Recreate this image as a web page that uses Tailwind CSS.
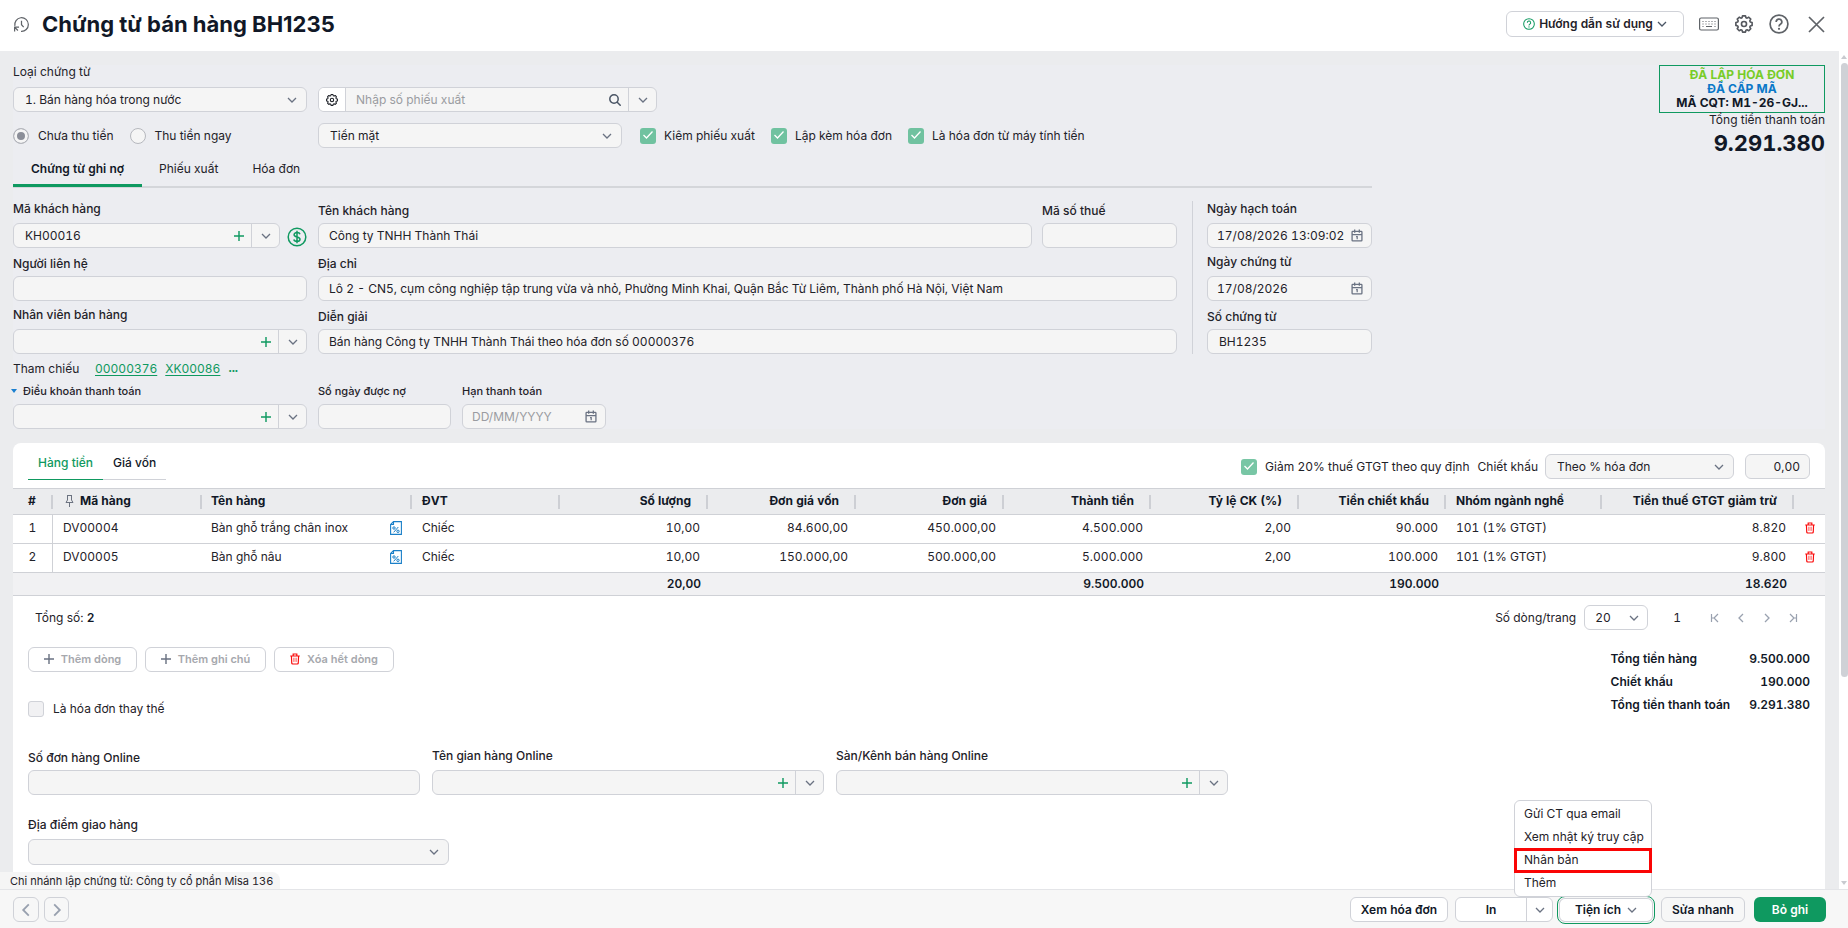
<!DOCTYPE html>
<html lang="vi">
<head>
    <meta charset="UTF-8">
    <meta name="viewport" content="width=device-width, initial-scale=1.0">
    <title>Chứng từ bán hàng BH1235</title>
    <script src="https://cdn.jsdelivr.net/npm/@tailwindcss/browser@4"></script>
</head>
<body class="flex flex-col h-screen overflow-hidden bg-white font-[Inter,sans-serif] tabular-nums text-[12px] leading-4 text-[#1f2229]">

    <!-- Icon sprite -->
    <svg class="hidden" aria-hidden="true">
        <symbol id="chevron" viewBox="0 0 10 10"><path d="M1 3l4 4 4-4" fill="none" stroke="currentColor" stroke-width="1.3"/></symbol>
        <symbol id="plus" viewBox="0 0 12 12"><path d="M6 0v12M0 6h12" fill="none" stroke="currentColor" stroke-width="1.7"/></symbol>
        <symbol id="gear" viewBox="0 0 20 20">
            <path d="M8.3 1.5h3.4l.6 2.2 1.3.5 2-1.1 2.3 2.3-1.1 2 .5 1.3 2.2.6v3.4l-2.2.6-.5 1.3 1.1 2-2.3 2.3-2-1.1-1.3.5-.6 2.2H8.3l-.6-2.2-1.3-.5-2 1.1-2.3-2.3 1.1-2-.5-1.3L.5 12.7V9.3l2.2-.6.5-1.3-1.1-2 2.3-2.3 2 1.1 1.3-.5z" transform="translate(.5 -.5) scale(.95)" fill="none" stroke="currentColor" stroke-width="1.9" stroke-linejoin="round"/>
            <circle cx="10" cy="10" r="2.8" fill="none" stroke="currentColor" stroke-width="1.8"/>
        </symbol>
        <symbol id="help" viewBox="0 0 20 20">
            <circle cx="10" cy="10" r="8.9" fill="none" stroke="currentColor" stroke-width="1.7"/>
            <path d="M7.2 8a2.8 2.8 0 1 1 4.2 2.3c-1 .6-1.4 1-1.4 2.1" fill="none" stroke="currentColor" stroke-width="1.7"/>
            <circle cx="10" cy="14.8" r="1.1" fill="currentColor"/>
        </symbol>
        <symbol id="calendar" viewBox="0 0 12 14">
            <path d="M1.5 2.5h9a.8.8 0 0 1 .8.8v8.700a.8.8 0 0 1-.8.8h-9a.8.8 0 0 1-.8-.8V3.300a.8.8 0 0 1 .8-.8zM.7 6h10.600M3.500.5v3.500M8.500.5v3.500" fill="none" stroke="currentColor" stroke-width="1.4"/>
            <path d="M5 8.300h1.200v2.700" fill="none" stroke="currentColor" stroke-width="1.3"/>
        </symbol>
        <symbol id="trash" viewBox="0 0 12 14">
            <path d="M.3 3.400h11.400M3.800 3V1h4.400v2M1.700 3.500l.4 8.500q.1 1 1 1h5.800q.9 0 1-1l.4-8.500" fill="none" stroke="currentColor" stroke-width="1.4"/>
            <path d="M4.700 5.500v5M7.300 5.500v5" fill="none" stroke="currentColor" stroke-width=".9"/>
        </symbol>
        <symbol id="tax" viewBox="0 0 12 14">
            <path d="M3.500.6h7.900v12.800H.6V3.500zM3.500.6v2.900H.6" fill="none" stroke="currentColor" stroke-width="1.1"/>
            <circle cx="4" cy="7" r="1.2" fill="none" stroke="currentColor"/>
            <circle cx="8" cy="10.3" r="1.2" fill="none" stroke="currentColor"/>
            <path d="M8.300 6l-4.600 5.300" stroke="currentColor"/>
        </symbol>
    </svg>

    <!-- Header -->
    <header class="flex items-center h-[51px] shrink-0 pl-[13px] pr-[23px] pb-[3px]">
        <svg class="size-[17px] text-[#5f6368]" viewBox="0 0 18 18" fill="none" stroke="currentColor" stroke-width="1.3">
            <path d="M8.500 16.200A7.200 7.200 0 1 0 2 10.500M1.700 16.500v-4.700h4.700M1.900 12l3.300 3.300"/>
            <path d="M9 5v4.300l2.300 2.400"/>
        </svg>
        <h1 class="ml-3 text-[22px] leading-7 font-bold normal-nums text-[#111827]">Chứng từ bán hàng BH1235</h1>
        <button class="flex items-center justify-center gap-1 ml-auto w-[178px] h-[26px] border border-[#d0d2d8] rounded-md font-semibold">
            <svg class="size-3 text-[#0f9960]"><use href="#help"/></svg>
            Hướng dẫn sử dụng
            <svg class="size-[10px] text-gray-600"><use href="#chevron"/></svg>
        </button>
        <button class="ml-[15px] text-[#5f6368]" aria-label="Phím tắt">
            <svg class="w-5 h-[14px]" viewBox="0 0 20 14" fill="none" stroke="currentColor">
                <rect x=".6" y="1" width="18.800" height="12" rx="1.500" stroke-width="1.2"/>
                <path d="M3.500 4.500h13M3.500 7h13" stroke-width="1" stroke-dasharray="1 2"/>
                <path d="M3.500 9.500h1M7 9.500h6M15.500 9.500h1"/>
            </svg>
        </button>
        <button class="ml-4 text-[#55585e]" aria-label="Thiết lập"><svg class="size-[18px]"><use href="#gear"/></svg></button>
        <button class="ml-4 text-[#5f6368]" aria-label="Trợ giúp"><svg class="size-5"><use href="#help"/></svg></button>
        <button class="ml-[19px] text-[#5f6368]" aria-label="Đóng">
            <svg class="size-[17px]" viewBox="0 0 17 17"><path d="M1 1l15 15M16 1L1 16" stroke="currentColor" stroke-width="1.7"/></svg>
        </button>
    </header>

    <div class="relative flex flex-1 min-h-0">
        <main class="flex-1 min-w-0 overflow-hidden bg-[#ebecee] pt-[14px] pl-[13px] pr-[14px]">
            <div class="flex justify-between bg-[#ecedf1]">
                <div class="flex-1 max-w-[1359px]">
                    <label for="docType" class="block leading-[14px]">Loại chứng từ</label>
                    <div class="flex mt-2 gap-[11px]">
                        <div class="relative w-[294px]">
                            <select id="docType" class="appearance-none w-full h-[25px] pl-[11px] pr-7 border border-[#d0d2d8] rounded-md bg-[#f5f5f5]">
                                <option>1. Bán hàng hóa trong nước</option>
                            </select>
                            <svg class="absolute right-[10px] top-2 size-[10px] text-gray-500 pointer-events-none"><use href="#chevron"/></svg>
                        </div>
                        <div class="flex w-[339px] h-[25px] border border-[#d0d2d8] rounded-md bg-[#f5f5f5] overflow-hidden">
                            <button class="flex items-center justify-center w-[27px] bg-white border-r border-[#d0d2d8]" aria-label="Tùy chọn"><svg class="size-3"><use href="#gear"/></svg></button>
                            <input type="text" aria-label="Số phiếu xuất" placeholder="Nhập số phiếu xuất" class="flex-1 min-w-0 px-[10px] placeholder:text-[#9a9ca1]">
                            <button class="px-[7px] text-gray-600" aria-label="Tìm">
                                <svg class="size-3" viewBox="0 0 12 12" fill="none" stroke="currentColor" stroke-width="1.5"><circle cx="5" cy="5" r="4.2"/><path d="M8 8l3.700 3.700"/></svg>
                            </button>
                            <button class="flex items-center justify-center w-7 border-l border-[#d0d2d8] text-gray-500" aria-label="Mở danh sách"><svg class="size-[10px]"><use href="#chevron"/></svg></button>
                        </div>
                    </div>

                    <div class="flex items-center mt-[11px] h-[25px] leading-[14px]">
                        <div class="flex items-center w-[305px]">
                            <input type="radio" name="pay" id="unpaid" checked class="appearance-none size-4 border border-[#b6b8be] rounded-full bg-[#f5f5f5] checked:bg-[#8b8e98] checked:shadow-[inset_0_0_0_3px_#f5f5f5]">
                            <label for="unpaid" class="ml-[9px]">Chưa thu tiền</label>
                            <input type="radio" name="pay" id="paid" class="appearance-none ml-4 size-4 border border-[#b6b8be] rounded-full bg-[#f5f5f5]">
                            <label for="paid" class="ml-[9px]">Thu tiền ngay</label>
                        </div>
                        <div class="relative w-[304px]">
                            <select aria-label="Phương thức thanh toán" class="appearance-none w-full h-[25px] px-[11px] border border-[#d0d2d8] rounded-md bg-[#f5f5f5]">
                                <option>Tiền mặt</option>
                            </select>
                            <svg class="absolute right-[10px] top-2 size-[10px] text-gray-500 pointer-events-none"><use href="#chevron"/></svg>
                        </div>
                        <div class="flex items-center gap-4 ml-[18px]">
                            <label class="flex items-center gap-2">
                                <span class="relative size-4">
                                    <input type="checkbox" checked class="block appearance-none size-4 rounded-[3px] bg-[#70c2a0]">
                                    <svg class="absolute left-[3px] top-[2px] size-[10px] text-white" viewBox="0 0 10 10"><path d="M.5 5l3 3 6-6.500" fill="none" stroke="currentColor" stroke-width="1.3"/></svg>
                                </span>
                                Kiêm phiếu xuất
                            </label>
                            <label class="flex items-center gap-2">
                                <span class="relative size-4">
                                    <input type="checkbox" checked class="block appearance-none size-4 rounded-[3px] bg-[#70c2a0]">
                                    <svg class="absolute left-[3px] top-[2px] size-[10px] text-white" viewBox="0 0 10 10"><path d="M.5 5l3 3 6-6.500" fill="none" stroke="currentColor" stroke-width="1.3"/></svg>
                                </span>
                                Lập kèm hóa đơn
                            </label>
                            <label class="flex items-center gap-2">
                                <span class="relative size-4">
                                    <input type="checkbox" checked class="block appearance-none size-4 rounded-[3px] bg-[#70c2a0]">
                                    <svg class="absolute left-[3px] top-[2px] size-[10px] text-white" viewBox="0 0 10 10"><path d="M.5 5l3 3 6-6.500" fill="none" stroke="currentColor" stroke-width="1.3"/></svg>
                                </span>
                                Là hóa đơn từ máy tính tiền
                            </label>
                        </div>
                    </div>

                    <nav class="flex h-10 border-b-2 border-[#d4d6da]">
                        <button class="h-[39px] px-[18px] pt-[6px] border-b-3 border-[#0f9960] font-semibold text-[#111827]">Chứng từ ghi nợ</button>
                        <button class="h-9 px-[17px] pt-[6px]">Phiếu xuất</button>
                        <button class="h-9 px-[17px] pt-[6px]">Hóa đơn</button>
                    </nav>

                    <div class="flex mt-[13px]">
                        <!-- Customer codes -->
                        <div class="flex flex-col gap-[6px] w-[294px] mr-[11px]">
                            <div class="flex items-end gap-[7px]">
                                <div class="flex flex-col gap-1.5 flex-1">
                                    <label for="customerCode" class="font-medium">Mã khách hàng</label>
                                    <div class="flex h-[25px] border border-[#d0d2d8] rounded-md bg-[#f5f5f5]">
                                        <input id="customerCode" type="text" value="KH00016" class="flex-1 min-w-0 pl-[11px]">
                                        <button class="px-[7px] text-[#0f9960]" aria-label="Thêm"><svg class="size-[10px]"><use href="#plus"/></svg></button>
                                        <button class="flex items-center justify-center w-7 border-l border-[#d0d2d8] text-gray-500" aria-label="Mở danh sách"><svg class="size-[10px]"><use href="#chevron"/></svg></button>
                                    </div>
                                </div>
                                <button class="pb-px text-[#0f9960]" aria-label="Công nợ">
                                    <svg class="size-5" viewBox="0 0 20 20" fill="none" stroke="currentColor" stroke-width="1.5">
                                        <circle cx="10" cy="10" r="8.8"/>
                                        <path d="M13 7.300c-.3-1.200-1.500-1.700-3-1.700s-2.900.6-2.900 2.100c0 3 5.900 1.400 5.900 4.500 0 1.500-1.400 2.200-3 2.200s-2.900-.6-3.200-1.900M10 3.800v12.400"/>
                                    </svg>
                                </button>
                            </div>
                            <div class="flex flex-col gap-1 pt-[2px]">
                                <label for="contact" class="font-medium">Người liên hệ</label>
                                <input id="contact" type="text" class="h-[25px] px-3 border border-[#d0d2d8] rounded-md bg-[#f5f5f5]">
                            </div>
                            <div class="flex flex-col gap-1.5">
                                <label for="seller" class="font-medium">Nhân viên bán hàng</label>
                                <div class="flex h-[25px] border border-[#d0d2d8] rounded-md bg-[#f5f5f5]">
                                    <input id="seller" type="text" class="flex-1 min-w-0 pl-3">
                                    <button class="px-[7px] text-[#0f9960]" aria-label="Thêm"><svg class="size-[10px]"><use href="#plus"/></svg></button>
                                    <button class="flex items-center justify-center w-7 border-l border-[#d0d2d8] text-gray-500" aria-label="Mở danh sách"><svg class="size-[10px]"><use href="#chevron"/></svg></button>
                                </div>
                            </div>
                        </div>
                        <!-- Customer details -->
                        <div class="flex flex-col gap-2 flex-1 min-w-0 pt-[2px]">
                            <div class="flex gap-[10px]">
                                <div class="flex flex-col gap-1 flex-1">
                                    <label for="customerName" class="font-medium">Tên khách hàng</label>
                                    <input id="customerName" type="text" value="Công ty TNHH Thành Thái" class="h-[25px] px-[10px] border border-[#d0d2d8] rounded-md bg-[#f5f5f5]">
                                </div>
                                <div class="flex flex-col gap-1 w-[135px]">
                                    <label for="taxCode" class="font-medium">Mã số thuế</label>
                                    <input id="taxCode" type="text" class="h-[25px] px-[10px] border border-[#d0d2d8] rounded-md bg-[#f5f5f5]">
                                </div>
                            </div>
                            <div class="flex flex-col gap-1">
                                <label for="address" class="font-medium">Địa chỉ</label>
                                <input id="address" type="text" value="Lô 2 - CN5, cụm công nghiệp tập trung vừa và nhỏ, Phường Minh Khai, Quận Bắc Từ Liêm, Thành phố Hà Nội, Việt Nam" class="h-[25px] px-[10px] border border-[#d0d2d8] rounded-md bg-[#f5f5f5]">
                            </div>
                            <div class="flex flex-col gap-1">
                                <label for="note" class="font-medium">Diễn giải</label>
                                <input id="note" type="text" value="Bán hàng Công ty TNHH Thành Thái theo hóa đơn số 00000376" class="h-[25px] px-[10px] border border-[#d0d2d8] rounded-md bg-[#f5f5f5]">
                            </div>
                        </div>
                        <!-- Dates -->
                        <div class="flex flex-col gap-[6px] ml-[15px] pl-[14px] border-l border-[#d0d2d8]">
                            <div class="flex flex-col gap-1.5">
                                <label for="postDate" class="font-medium">Ngày hạch toán</label>
                                <div class="flex items-center w-[165px] h-[25px] pr-2 border border-[#d0d2d8] rounded-md bg-[#f5f5f5]">
                                    <input id="postDate" type="text" value="17/08/2026 13:09:02" class="flex-1 min-w-0 pl-[9px]">
                                    <svg class="w-3 h-[13px] text-gray-500"><use href="#calendar"/></svg>
                                </div>
                            </div>
                            <div class="flex flex-col gap-1.5">
                                <label for="docDate" class="font-medium">Ngày chứng từ</label>
                                <div class="flex items-center w-[165px] h-[25px] pr-2 border border-[#d0d2d8] rounded-md bg-[#f5f5f5]">
                                    <input id="docDate" type="text" value="17/08/2026" class="flex-1 min-w-0 pl-[9px]">
                                    <svg class="w-3 h-[13px] text-gray-500"><use href="#calendar"/></svg>
                                </div>
                            </div>
                            <div class="flex flex-col gap-1 pt-[2px]">
                                <label for="docNo" class="font-medium">Số chứng từ</label>
                                <input id="docNo" type="text" value="BH1235" class="w-[165px] h-[25px] px-[11px] border border-[#d0d2d8] rounded-md bg-[#f5f5f5]">
                            </div>
                        </div>
                    </div>

                    <div class="flex mt-[7px] text-[#0f9960]">
                        <span class="w-[82px] text-[#1f2229]">Tham chiếu</span>
                        <a href="#" class="underline underline-offset-2">00000376</a>
                        <a href="#" class="ml-2 underline underline-offset-2">XK00086</a>
                        <a href="#" class="ml-2 font-bold leading-[14px]">...</a>
                    </div>

                    <div class="flex mt-[6px] text-[11px] font-medium">
                        <div class="flex flex-col gap-[5px] w-[294px] mr-[11px]">
                            <label for="terms" class="flex items-center gap-[6px] -ml-[2px]">
                                <svg class="w-[6px] h-1 text-[#1a7fd0]" viewBox="0 0 6 4"><path d="M0 0h6L3 4z" fill="currentColor"/></svg>
                                Điều khoản thanh toán
                            </label>
                            <div class="flex h-[25px] border border-[#d0d2d8] rounded-md bg-[#f5f5f5]">
                                <input id="terms" type="text" class="flex-1 min-w-0 pl-3">
                                <button class="px-[7px] text-[#0f9960]" aria-label="Thêm"><svg class="size-[10px]"><use href="#plus"/></svg></button>
                                <button class="flex items-center justify-center w-7 border-l border-[#d0d2d8] text-gray-500" aria-label="Mở danh sách"><svg class="size-[10px]"><use href="#chevron"/></svg></button>
                            </div>
                        </div>
                        <div class="flex flex-col gap-[5px] w-[133px] mr-[11px]">
                            <label for="dueDays">Số ngày được nợ</label>
                            <input id="dueDays" type="text" class="h-[25px] px-[10px] border border-[#d0d2d8] rounded-md bg-[#f5f5f5]">
                        </div>
                        <div class="flex flex-col gap-[5px] w-[144px]">
                            <label for="dueDate">Hạn thanh toán</label>
                            <div class="flex items-center h-[25px] pr-2 border border-[#d0d2d8] rounded-md bg-[#f5f5f5]">
                                <input id="dueDate" type="text" placeholder="DD/MM/YYYY" class="flex-1 min-w-0 pl-[9px] text-[12px] font-normal placeholder:text-[#9a9ca1]">
                                <svg class="w-3 h-[13px] text-gray-500"><use href="#calendar"/></svg>
                            </div>
                        </div>
                    </div>
                </div>

                <div class="flex flex-col items-end">
                    <div class="w-[166px] h-12 pt-[2px] border border-[#0f9960] text-center font-bold leading-[14px]">
                        <div class="text-[#78cc28]">ĐÃ LẬP HÓA ĐƠN</div>
                        <div class="text-[#0a78c8]">ĐÃ CẤP MÃ</div>
                        <div class="text-[#111827]">MÃ CQT: M1-26-GJ...</div>
                    </div>
                    <div class="leading-[14px]">Tổng tiền thanh toán</div>
                    <div class="mt-[2px] text-[22px] leading-7 font-bold text-[#111827]">9.291.380</div>
                </div>
            </div>

            <section class="h-full mt-[14px] bg-white rounded-t-lg">
                <div class="flex items-start justify-between h-[45px] pl-[15px] pr-[15px]">
                    <nav class="flex font-medium">
                        <button class="h-[37px] px-[10px] pt-1 border-b border-[#0f9960] text-[#0f9960]">Hàng tiền</button>
                        <button class="h-[37px] px-[10px] pt-1 border-b border-[#d0d2d8] text-[#111827]">Giá vốn</button>
                    </nav>
                    <div class="flex items-center pt-[11px]">
                        <label class="flex items-center gap-2">
                            <span class="relative size-4">
                                <input type="checkbox" checked class="block appearance-none size-4 rounded-[3px] bg-[#78c6a5]">
                                <svg class="absolute left-[3px] top-[2px] size-[10px] text-white" viewBox="0 0 10 10"><path d="M.5 5l3 3 6-6.500" fill="none" stroke="currentColor" stroke-width="1.3"/></svg>
                            </span>
                            Giảm 20% thuế GTGT theo quy định
                        </label>
                        <label for="discountType" class="ml-2">Chiết khấu</label>
                        <div class="relative ml-[7px] w-[189px]">
                            <select id="discountType" class="appearance-none w-full h-[25px] px-[11px] border border-[#d0d2d8] rounded-md bg-[#f5f5f5]">
                                <option>Theo % hóa đơn</option>
                            </select>
                            <svg class="absolute right-[10px] top-2 size-[10px] text-gray-500 pointer-events-none"><use href="#chevron"/></svg>
                        </div>
                        <input type="text" aria-label="Tỷ lệ chiết khấu" value="0,00" class="ml-[11px] w-[65px] h-[25px] px-[9px] border border-[#d0d2d8] rounded-md bg-[#f5f5f5] text-right">
                    </div>
                </div>

                <table class="w-full table-fixed border-separate border-spacing-0 leading-[14px] [&_td]:border-b [&_td]:border-[#cfd1d6] [&_th]:border-y [&_th]:border-[#cfd1d6] [&_td]:p-0 [&_th]:p-0">
                    <colgroup>
                        <col class="w-[40px]"><col class="w-[149px]"><col class="w-[210px]"><col class="w-[148px]"><col class="w-[148px]"><col class="w-[148px]"><col class="w-[148px]"><col class="w-[147px]"><col class="w-[148px]"><col class="w-[147px]"><col class="w-[156px]"><col class="w-[192px]"><col class="w-[31px]">
                    </colgroup>
                    <thead class="bg-[#ebecee] font-semibold text-[#111827]">
                        <tr class="h-[27px] [&_div]:h-[14px] [&_div]:leading-3 [&_div]:border-[#cdcfd4]">
                            <th><div class="border-r-2">#</div></th>
                            <th><div class="flex gap-[6px] pl-3 border-r-2">
                                <svg class="w-[9px] h-3" viewBox="0 0 9 12" fill="none" stroke="#6b7280"><path d="M2 .5h5M2.500.5v4.500L1 7.500h7L6.500 5V.5M4.500 7.500V12"/></svg>
                                Mã hàng
                            </div></th>
                            <th><div class="pl-[9px] text-left border-r-2">Tên hàng</div></th>
                            <th><div class="pl-[10px] text-left border-r-2">ĐVT</div></th>
                            <th><div class="pr-[15px] text-right border-r-2">Số lượng</div></th>
                            <th><div class="pr-[15px] text-right border-r-2">Đơn giá vốn</div></th>
                            <th><div class="pr-[15px] text-right border-r-2">Đơn giá</div></th>
                            <th><div class="pr-[15px] text-right border-r-2">Thành tiền</div></th>
                            <th><div class="pr-[15px] text-right border-r-2">Tỷ lệ CK (%)</div></th>
                            <th><div class="pr-[15px] text-right border-r-2">Tiền chiết khấu</div></th>
                            <th><div class="pl-[10px] text-left border-r-2">Nhóm ngành nghề</div></th>
                            <th><div class="pr-[15px] text-right border-r-2">Tiền thuế GTGT giảm trừ</div></th>
                            <th></th>
                        </tr>
                    </thead>
                    <tbody class="[&_tr]:h-[29px] [&_td]:pb-[2px] text-right">
                        <tr>
                            <td class="text-center border-r border-r-white">1</td>
                            <td><div class="pl-[10px] text-left">DV00004</div></td>
                            <td><div class="flex items-center justify-between pl-[9px] pr-[10px]">Bàn ghỗ trắng chân inox <svg class="w-3 h-[14px] text-[#1a7fc8]"><use href="#tax"/></svg></div></td>
                            <td><div class="pl-[10px] text-left">Chiếc</div></td>
                            <td><div class="pr-2">10,00</div></td>
                            <td><div class="pr-2">84.600,00</div></td>
                            <td><div class="pr-2">450.000,00</div></td>
                            <td><div class="pr-2">4.500.000</div></td>
                            <td><div class="pr-2">2,00</div></td>
                            <td><div class="pr-2">90.000</div></td>
                            <td><div class="pl-[10px] text-left">101 (1% GTGT)</div></td>
                            <td><div class="pr-2">8.820</div></td>
                            <td><button class="block mx-auto text-[#fa0a0a]" aria-label="Xóa dòng 1"><svg class="w-[10px] h-3"><use href="#trash"/></svg></button></td>
                        </tr>
                        <tr>
                            <td class="text-center border-r border-r-white">2</td>
                            <td><div class="pl-[10px] text-left">DV00005</div></td>
                            <td><div class="flex items-center justify-between pl-[9px] pr-[10px]">Bàn ghỗ nâu <svg class="w-3 h-[14px] text-[#1a7fc8]"><use href="#tax"/></svg></div></td>
                            <td><div class="pl-[10px] text-left">Chiếc</div></td>
                            <td><div class="pr-2">10,00</div></td>
                            <td><div class="pr-2">150.000,00</div></td>
                            <td><div class="pr-2">500.000,00</div></td>
                            <td><div class="pr-2">5.000.000</div></td>
                            <td><div class="pr-2">2,00</div></td>
                            <td><div class="pr-2">100.000</div></td>
                            <td><div class="pl-[10px] text-left">101 (1% GTGT)</div></td>
                            <td><div class="pr-2">9.800</div></td>
                            <td><button class="block mx-auto text-[#fa0a0a]" aria-label="Xóa dòng 2"><svg class="w-[10px] h-3"><use href="#trash"/></svg></button></td>
                        </tr>
                    </tbody>
                    <tfoot class="bg-[#f1f1f3] text-right font-semibold text-[#111827]">
                        <tr class="h-[23px]">
                            <td colspan="4"></td>
                            <td><div class="pr-[7px]">20,00</div></td>
                            <td colspan="2"></td>
                            <td><div class="pr-[7px]">9.500.000</div></td>
                            <td></td>
                            <td><div class="pr-[7px]">190.000</div></td>
                            <td></td>
                            <td><div class="pr-[7px]">18.620</div></td>
                            <td></td>
                        </tr>
                    </tfoot>
                </table>

                <div class="flex items-center mt-[9px] pl-[22px] pr-[27px] leading-[14px]">
                    <p>Tổng số: <b class="font-semibold text-[#111827]">2</b></p>
                    <label for="pageSize" class="ml-auto">Số dòng/trang</label>
                    <div class="relative ml-2 w-16">
                        <select id="pageSize" class="appearance-none w-full h-[25px] px-[10px] border border-[#d0d2d8] rounded-md bg-white">
                            <option>20</option>
                        </select>
                        <svg class="absolute right-[9px] top-2 size-[10px] text-gray-500 pointer-events-none"><use href="#chevron"/></svg>
                    </div>
                    <span class="ml-[25px] mr-[29px]">1</span>
                    <div class="flex items-center gap-4 text-gray-400">
                        <button aria-label="Trang đầu"><svg class="size-[10px]" viewBox="0 0 10 10"><path d="M1.500 1v8M8 1L4 5l4 4M1.500 5H4" fill="none" stroke="currentColor" stroke-width="1.2"/></svg></button>
                        <button aria-label="Trang trước"><svg class="size-[10px] rotate-90"><use href="#chevron"/></svg></button>
                        <button aria-label="Trang sau"><svg class="size-[10px] -rotate-90"><use href="#chevron"/></svg></button>
                        <button aria-label="Trang cuối"><svg class="size-[10px]" viewBox="0 0 10 10"><path d="M8.500 1v8M2 1l4 4-4 4M8.500 5H6" fill="none" stroke="currentColor" stroke-width="1.2"/></svg></button>
                    </div>
                </div>

                <div class="flex justify-between mt-[17px] pl-[15px] pr-[15px]">
                    <div>
                        <div class="flex gap-2 text-[11px] font-semibold text-[#a6a8ad] [&_button]:pb-[2px]">
                            <button class="flex items-center justify-center gap-[7px] w-[109px] h-[25px] border border-[#d0d2d8] rounded-md"><svg class="size-[10px] text-gray-500"><use href="#plus"/></svg>Thêm dòng</button>
                            <button class="flex items-center justify-center gap-[7px] w-[121px] h-[25px] border border-[#d0d2d8] rounded-md"><svg class="size-[10px] text-gray-500"><use href="#plus"/></svg>Thêm ghi chú</button>
                            <button class="flex items-center justify-center gap-[7px] w-[120px] h-[25px] border border-[#d0d2d8] rounded-md"><svg class="w-[10px] h-3 text-[#fa0a0a]"><use href="#trash"/></svg>Xóa hết dòng</button>
                        </div>
                        <label class="flex items-center gap-[9px] mt-[29px]">
                            <input type="checkbox" class="appearance-none size-4 border border-[#d0d2d8] rounded-[3px] bg-[#f1f1f3]">
                            Là hóa đơn thay thế
                        </label>
                    </div>
                    <dl class="grid grid-cols-[auto_auto] gap-x-[19px] h-[69px] leading-[23px] font-semibold text-[#111827] [&_dd]:text-right">
                        <dt>Tổng tiền hàng</dt><dd>9.500.000</dd>
                        <dt>Chiết khấu</dt><dd>190.000</dd>
                        <dt>Tổng tiền thanh toán</dt><dd>9.291.380</dd>
                    </dl>
                </div>

                <div class="grid grid-cols-3 gap-3 max-w-[1215px] mt-[31px] pl-[15px]">
                    <div class="flex flex-col gap-1 pt-[2px]">
                        <label for="onlineOrder" class="font-medium">Số đơn hàng Online</label>
                        <input id="onlineOrder" type="text" class="h-[25px] px-3 border border-[#d0d2d8] rounded-md bg-[#f5f5f5]">
                    </div>
                    <div class="flex flex-col gap-1.5">
                        <label for="onlineShop" class="font-medium">Tên gian hàng Online</label>
                        <div class="flex h-[25px] border border-[#d0d2d8] rounded-md bg-[#f5f5f5]">
                            <input id="onlineShop" type="text" class="flex-1 min-w-0 pl-3">
                            <button class="px-[7px] text-[#0f9960]" aria-label="Thêm"><svg class="size-[10px]"><use href="#plus"/></svg></button>
                            <button class="flex items-center justify-center w-7 border-l border-[#d0d2d8] text-gray-500" aria-label="Mở danh sách"><svg class="size-[10px]"><use href="#chevron"/></svg></button>
                        </div>
                    </div>
                    <div class="flex flex-col gap-1.5">
                        <label for="onlineChannel" class="font-medium">Sàn/Kênh bán hàng Online</label>
                        <div class="flex h-[25px] border border-[#d0d2d8] rounded-md bg-[#f5f5f5]">
                            <input id="onlineChannel" type="text" class="flex-1 min-w-0 pl-3">
                            <button class="px-[7px] text-[#0f9960]" aria-label="Thêm"><svg class="size-[10px]"><use href="#plus"/></svg></button>
                            <button class="flex items-center justify-center w-7 border-l border-[#d0d2d8] text-gray-500" aria-label="Mở danh sách"><svg class="size-[10px]"><use href="#chevron"/></svg></button>
                        </div>
                    </div>
                </div>

                <div class="flex flex-col gap-1.5 mt-[22px] pl-[15px]">
                    <label for="deliveryPlace" class="font-medium">Địa điểm giao hàng</label>
                    <div class="relative w-[421px]">
                        <select id="deliveryPlace" class="appearance-none w-full h-[26px] px-[11px] border border-[#d0d2d8] rounded-md bg-[#f5f5f5]"></select>
                        <svg class="absolute right-[10px] top-2 size-[10px] text-gray-500 pointer-events-none"><use href="#chevron"/></svg>
                    </div>
                </div>
            </section>
        </main>

        <!-- Scrollbar -->
        <div class="flex flex-col items-center w-[9px] pt-1 pb-1 bg-white text-[#c8cacf]">
            <svg class="w-[6px] h-1" viewBox="0 0 6 4"><path d="M3 0l3 4H0z" fill="currentColor"/></svg>
            <div class="w-[7px] h-[74%] mt-1 ml-[2px] rounded-full bg-[#cfd1d6]"></div>
            <svg class="w-[6px] h-1 mt-auto" viewBox="0 0 6 4"><path d="M0 0h6L3 4z" fill="currentColor"/></svg>
        </div>

        <p class="absolute left-0 bottom-0 h-[17px] pl-[10px] pr-[7px] rounded-tr-lg bg-[#f5f5f5] text-[11px] leading-[18px]">Chi nhánh lập chứng từ: Công ty cổ phần Misa 136</p>
    </div>

    <!-- Action bar -->
    <footer class="flex items-center shrink-0 h-[39px] pt-px pl-[13px] pr-[22px] border-t border-[#e4e5e8] bg-[#f7f7f7] font-semibold text-[#111827]">
        <button class="flex items-center justify-center w-[26px] h-[25px] border border-[#d0d2d8] rounded-md text-gray-400" aria-label="Chứng từ trước"><svg class="size-[14px] rotate-90"><use href="#chevron"/></svg></button>
        <button class="flex items-center justify-center w-[25px] h-[25px] ml-[5px] border border-[#d0d2d8] rounded-md text-gray-400" aria-label="Chứng từ sau"><svg class="size-[14px] -rotate-90"><use href="#chevron"/></svg></button>

        <button class="ml-auto w-[98px] h-[25px] border border-[#d0d2d8] rounded-md bg-white">Xem hóa đơn</button>
        <div class="flex ml-[7px] w-[98px] h-[25px] border border-[#d0d2d8] rounded-md bg-white">
            <button class="flex-1">In</button>
            <button class="flex items-center justify-center w-[26px] border-l border-[#d0d2d8] text-gray-500" aria-label="Tùy chọn in"><svg class="size-[10px]"><use href="#chevron"/></svg></button>
        </div>
        <div class="relative ml-1">
            <button class="flex items-center justify-center gap-[6px] w-[98px] h-[28px] border border-[#0f9960] rounded-lg bg-white shadow-[inset_0_0_0_1px_#f7f7f7,inset_0_0_0_2px_#d0d2d8]">
                Tiện ích <svg class="size-[10px] text-gray-500"><use href="#chevron"/></svg>
            </button>
            <div class="absolute right-[3px] bottom-[27px] flex flex-col w-[138px] pt-[2px] pb-px border border-[#d0d2d8] rounded-md bg-white font-normal text-[#1f2229] [&_button]:h-[23px] [&_button]:px-[9px] [&_button]:text-left [&_button]:whitespace-nowrap">
                <button>Gửi CT qua email</button>
                <button>Xem nhật ký truy cập</button>
                <button class="outline-3 -outline-offset-2 outline-[#fa0505]">Nhân bản</button>
                <button>Thêm</button>
            </div>
        </div>
        <button class="ml-[6px] w-[84px] h-[25px] border border-[#d0d2d8] rounded-md">Sửa nhanh</button>
        <button class="ml-[9px] w-[72px] h-[25px] rounded-md bg-[#0f9960] text-white">Bỏ ghi</button>
    </footer>
</body>
</html>
